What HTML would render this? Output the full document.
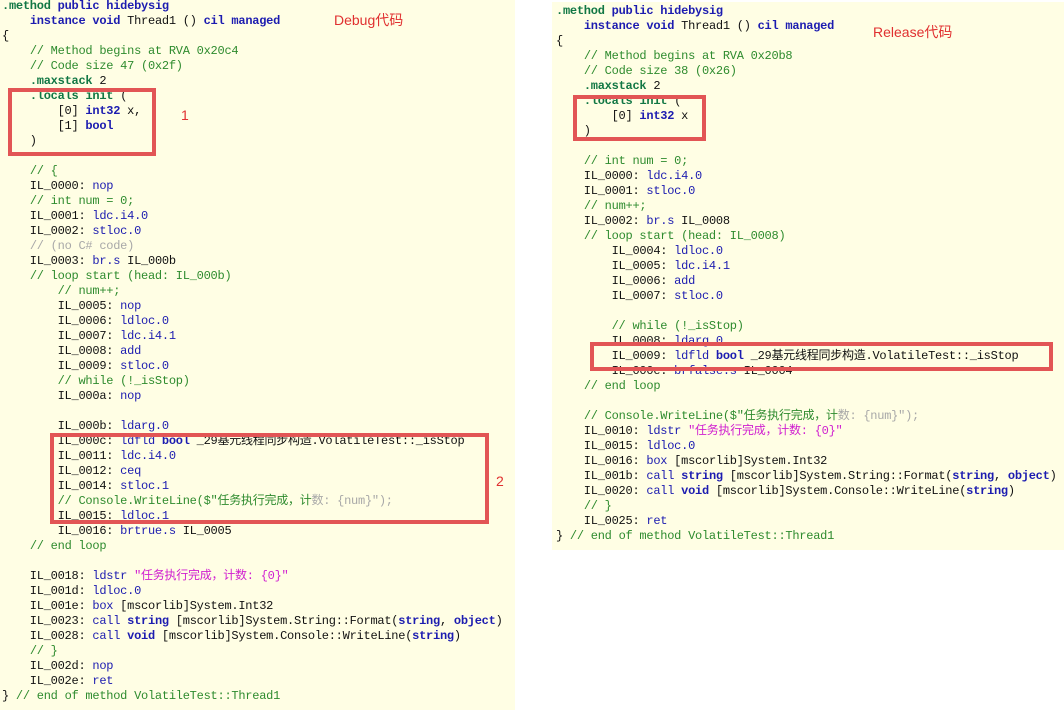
<!DOCTYPE html>
<html><head><meta charset="utf-8"><style>
body{margin:0;width:1064px;height:710px;background:#fff;position:relative;overflow:hidden;font-family:"Liberation Mono","Noto Sans CJK SC",monospace}
.p{position:absolute;background:#fffee4}
pre{position:absolute;margin:0;font-family:"Liberation Mono","Noto Sans CJK SC",monospace;font-size:12px;letter-spacing:-0.25px;line-height:15px;color:#111}
.k{color:#1c1cb0;font-weight:bold}
.o{color:#1c1cb0}
.d{color:#117744;font-weight:bold}
.c{color:#2e8b2e}
.g{color:#a8a8a8}
.s{color:#d020d0}
.box{position:absolute;border:4px solid #e25555;box-sizing:border-box}
.lb{position:absolute;color:#e03030;font-family:"Liberation Sans","Noto Sans CJK SC",sans-serif;font-size:14px}
</style></head><body>
<div class="p" style="left:0;top:0;width:515px;height:710px"></div>
<div class="p" style="left:552px;top:2px;width:512px;height:548px"></div>
<pre style="left:2px;top:-1px"><span class="d">.method</span> <span class="k">public hidebysig</span>
    <span class="k">instance void</span> Thread1 () <span class="k">cil managed</span>
{
    <span class="c">// Method begins at RVA 0x20c4</span>
    <span class="c">// Code size 47 (0x2f)</span>
    <span class="d">.maxstack</span> 2
    <span class="d">.locals</span> <span class="d">init</span> (
        [0] <span class="k">int32</span> x,
        [1] <span class="k">bool</span>
    )

    <span class="c">// {</span>
    IL_0000: <span class="o">nop</span>
    <span class="c">// int num = 0;</span>
    IL_0001: <span class="o">ldc.i4.0</span>
    IL_0002: <span class="o">stloc.0</span>
    <span class="g">// (no C# code)</span>
    IL_0003: <span class="o">br.s</span> IL_000b
    <span class="c">// loop start (head: IL_000b)</span>
        <span class="c">// num++;</span>
        IL_0005: <span class="o">nop</span>
        IL_0006: <span class="o">ldloc.0</span>
        IL_0007: <span class="o">ldc.i4.1</span>
        IL_0008: <span class="o">add</span>
        IL_0009: <span class="o">stloc.0</span>
        <span class="c">// while (!_isStop)</span>
        IL_000a: <span class="o">nop</span>

        IL_000b: <span class="o">ldarg.0</span>
        IL_000c: <span class="o">ldfld</span> <span class="k">bool</span> _29基元线程同步构造.VolatileTest::_isStop
        IL_0011: <span class="o">ldc.i4.0</span>
        IL_0012: <span class="o">ceq</span>
        IL_0014: <span class="o">stloc.1</span>
        <span class="c">// Console.WriteLine($"任务执行完成，计</span><span class="g">数: {num}");</span>
        IL_0015: <span class="o">ldloc.1</span>
        IL_0016: <span class="o">brtrue.s</span> IL_0005
    <span class="c">// end loop</span>

    IL_0018: <span class="o">ldstr</span> <span class="s">"任务执行完成，计数: {0}"</span>
    IL_001d: <span class="o">ldloc.0</span>
    IL_001e: <span class="o">box</span> [mscorlib]System.Int32
    IL_0023: <span class="o">call</span> <span class="k">string</span> [mscorlib]System.String::Format(<span class="k">string</span>, <span class="k">object</span>)
    IL_0028: <span class="o">call</span> <span class="k">void</span> [mscorlib]System.Console::WriteLine(<span class="k">string</span>)
    <span class="c">// }</span>
    IL_002d: <span class="o">nop</span>
    IL_002e: <span class="o">ret</span>
} <span class="c">// end of method VolatileTest::Thread1</span></pre>
<pre style="left:556px;top:4px"><span class="d">.method</span> <span class="k">public hidebysig</span>
    <span class="k">instance void</span> Thread1 () <span class="k">cil managed</span>
{
    <span class="c">// Method begins at RVA 0x20b8</span>
    <span class="c">// Code size 38 (0x26)</span>
    <span class="d">.maxstack</span> 2
    <span class="d">.locals</span> <span class="d">init</span> (
        [0] <span class="k">int32</span> x
    )

    <span class="c">// int num = 0;</span>
    IL_0000: <span class="o">ldc.i4.0</span>
    IL_0001: <span class="o">stloc.0</span>
    <span class="c">// num++;</span>
    IL_0002: <span class="o">br.s</span> IL_0008
    <span class="c">// loop start (head: IL_0008)</span>
        IL_0004: <span class="o">ldloc.0</span>
        IL_0005: <span class="o">ldc.i4.1</span>
        IL_0006: <span class="o">add</span>
        IL_0007: <span class="o">stloc.0</span>

        <span class="c">// while (!_isStop)</span>
        IL_0008: <span class="o">ldarg.0</span>
        IL_0009: <span class="o">ldfld</span> <span class="k">bool</span> _29基元线程同步构造.VolatileTest::_isStop
        IL_000e: <span class="o">brfalse.s</span> IL_0004
    <span class="c">// end loop</span>

    <span class="c">// Console.WriteLine($"任务执行完成，计</span><span class="g">数: {num}");</span>
    IL_0010: <span class="o">ldstr</span> <span class="s">"任务执行完成，计数: {0}"</span>
    IL_0015: <span class="o">ldloc.0</span>
    IL_0016: <span class="o">box</span> [mscorlib]System.Int32
    IL_001b: <span class="o">call</span> <span class="k">string</span> [mscorlib]System.String::Format(<span class="k">string</span>, <span class="k">object</span>)
    IL_0020: <span class="o">call</span> <span class="k">void</span> [mscorlib]System.Console::WriteLine(<span class="k">string</span>)
    <span class="c">// }</span>
    IL_0025: <span class="o">ret</span>
} <span class="c">// end of method VolatileTest::Thread1</span></pre>
<div class="box" style="left:8px;top:88px;width:148px;height:68px"></div>
<div class="box" style="left:50px;top:433px;width:439px;height:91px"></div>
<div class="box" style="left:573px;top:95px;width:133px;height:46px"></div>
<div class="box" style="left:590px;top:342px;width:463px;height:29px"></div>
<div class="lb" style="left:334px;top:10px">Debug代码</div>
<div class="lb" style="left:181px;top:107px">1</div>
<div class="lb" style="left:496px;top:473px">2</div>
<div class="lb" style="left:873px;top:22px">Release代码</div>
</body></html>
